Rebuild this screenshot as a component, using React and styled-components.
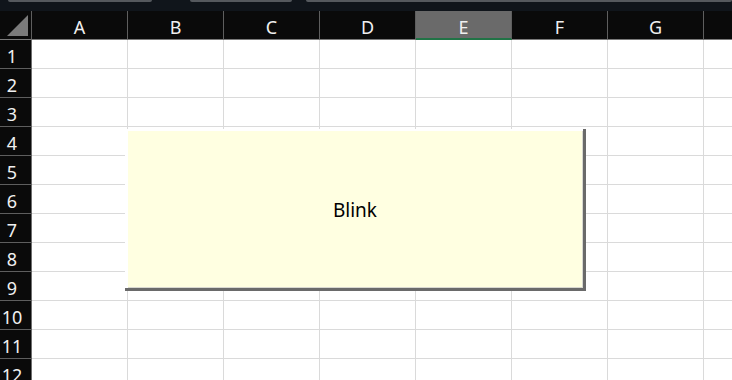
import React from "react";
import styled, { createGlobalStyle } from "styled-components";

const Global = createGlobalStyle`
  html, body { margin: 0; padding: 0; background: #ffffff; overflow: hidden; }
  #root { width: 732px; height: 380px; }
`;

const Page = styled.div`
  position: relative;
  width: 732px;
  height: 380px;
  overflow: hidden;
  background: #ffffff;
  font-family: "Noto Sans", "Open Sans", "Liberation Sans", sans-serif;
`;

const TopStrip = styled.div`
  height: 11px;
  background: #10151b;
  display: flex;
  align-items: flex-start;
  padding-left: 8px;
`;

const StripSegment = styled.div`
  height: 2px;
  width: ${(p) => (p.$w ? `${p.$w}px` : "auto")};
  flex: ${(p) => (p.$w ? "none" : "1")};
  margin-left: ${(p) => p.$ml || 0}px;
  background: #55595e;
  border-radius: 0 0 2px 2px;
`;

const Sheet = styled.div`
  display: grid;
  grid-template-columns: 32px repeat(8, 96px);
  grid-auto-rows: 29px;
  width: max-content;
`;

const Corner = styled.div`
  box-sizing: border-box;
  background: #0a0a0a;
  border-right: 1px solid #5e5e5e;
  border-bottom: 1px solid #7a7a7a;
  display: flex;
  svg { display: block; }
`;

const ColHeader = styled.div`
  box-sizing: border-box;
  background: ${(p) => (p.$selected ? "#6a6a6a" : "#0a0a0a")};
  border-right: 1px solid #5e5e5e;
  border-bottom: ${(p) => (p.$selected ? "2px solid #217346" : "1px solid #7a7a7a")};
  color: #f0f0f0;
  font-size: 18px;
  display: flex;
  align-items: center;
  justify-content: center;
  padding-top: ${(p) => (p.$selected ? 4 : 3)}px;
  line-height: 1;
`;

const RowHeader = styled.div`
  box-sizing: border-box;
  background: #0a0a0a;
  border-right: 1px solid #6e6e6e;
  border-bottom: 1px solid #5e5e5e;
  color: #f0f0f0;
  font-size: 18px;
  display: flex;
  align-items: center;
  justify-content: center;
  padding: 3px 7px 0 0;
  line-height: 1;
`;

const Cell = styled.div`
  box-sizing: border-box;
  background: #ffffff;
  border-right: 1px solid #dadada;
  border-bottom: 1px solid #dadada;
`;

const ShapeFrame = styled.div`
  position: absolute;
  left: 125px;
  top: 129px;
  width: 461px;
  height: 162px;
  box-sizing: border-box;
  background: #ffffff;
  padding: 2px 0 0 3px;
  border-right: 3px solid #6a6a6a;
  border-bottom: 3px solid #6a6a6a;
`;

const ShapeFill = styled.div`
  box-sizing: border-box;
  width: 100%;
  height: 100%;
  background: #ffffe1;
  border-right: 1px solid #d8d8d0;
  border-bottom: 1px solid #d8d8d0;
  display: flex;
  align-items: center;
  justify-content: center;
  color: #000000;
  font-size: 19px;
  padding-top: 2px;
`;

const columns = ["A", "B", "C", "D", "E", "F", "G", "H"];
const rows = Array.from({ length: 12 }, (_, i) => i + 1);

export default function App() {
  return (
    <Page>
      <Global />
      <TopStrip>
        <StripSegment $w={144} />
        <StripSegment $w={102} $ml={38} />
        <StripSegment $ml={14} />
      </TopStrip>
      <Sheet>
        <Corner>
          <svg width="31" height="28" viewBox="0 0 31 28">
            <polygon points="7,25 28,25 28,4" fill="#7b7b7b" />
          </svg>
        </Corner>
        {columns.map((c) => (
          <ColHeader key={c} $selected={c === "E"}>
            {c === "H" ? "" : c}
          </ColHeader>
        ))}
        {rows.map((r) => (
          <React.Fragment key={r}>
            <RowHeader>{r}</RowHeader>
            {columns.map((c) => (
              <Cell key={c} />
            ))}
          </React.Fragment>
        ))}
      </Sheet>
      <ShapeFrame>
        <ShapeFill>Blink</ShapeFill>
      </ShapeFrame>
    </Page>
  );
}
